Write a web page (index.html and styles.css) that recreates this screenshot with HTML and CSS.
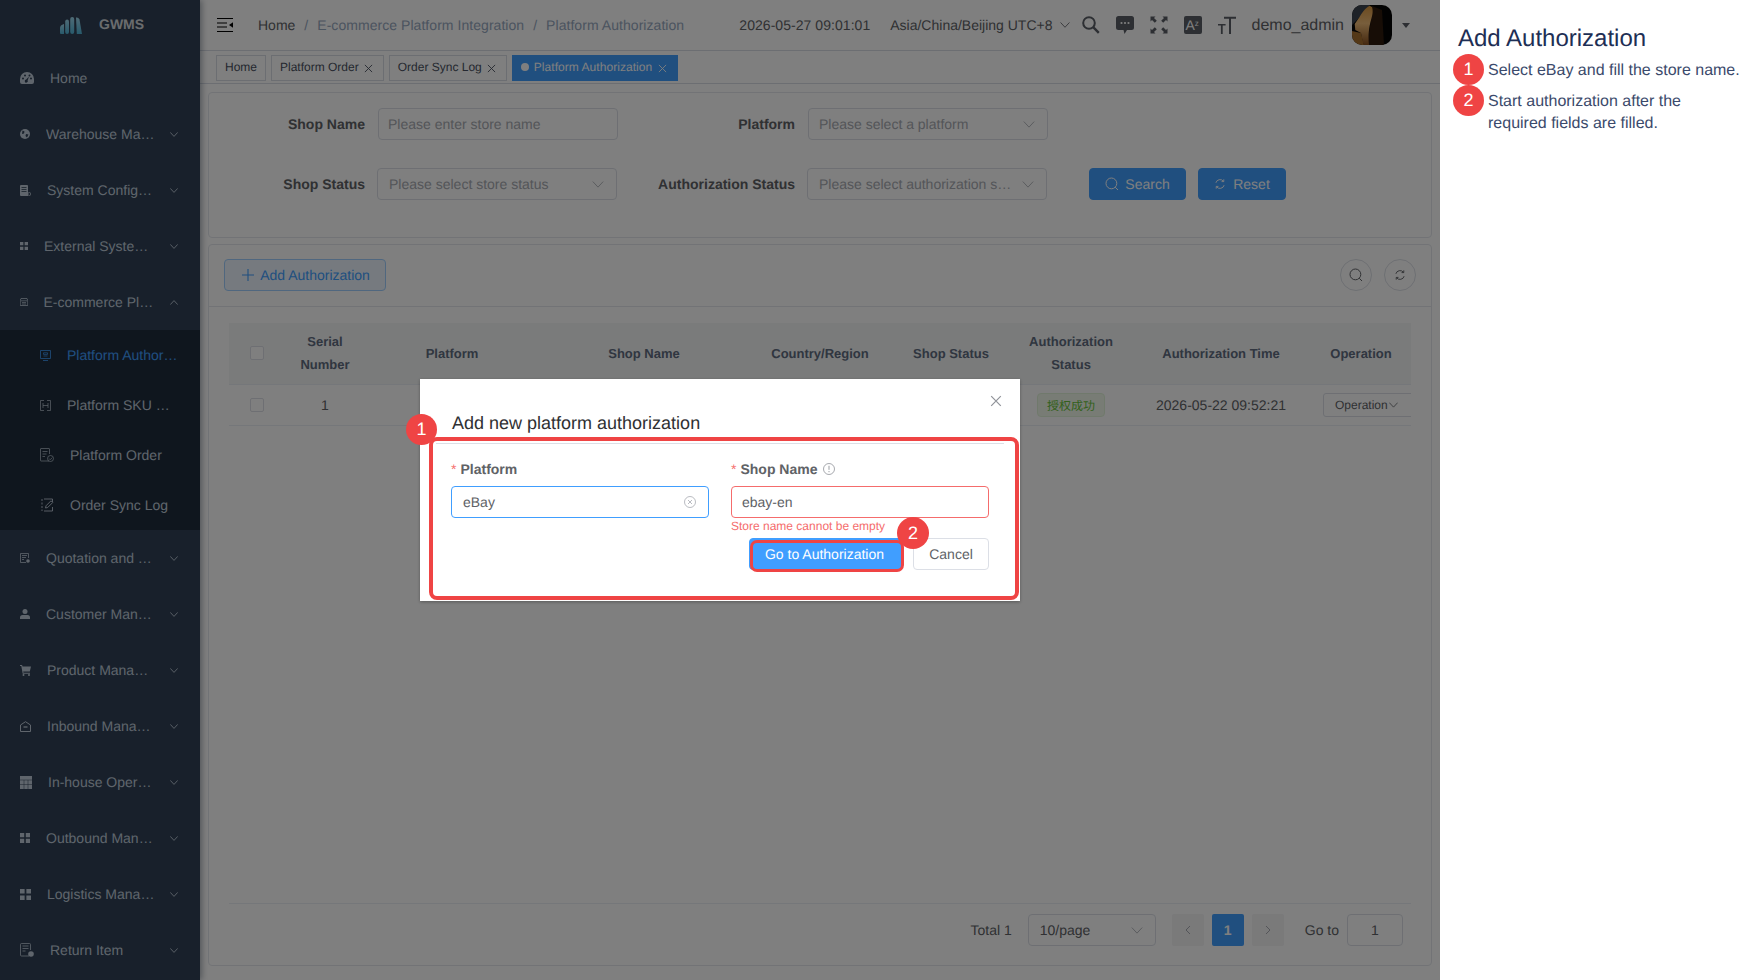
FILE: index.html
```html
<!DOCTYPE html>
<html lang="en">
<head>
<meta charset="utf-8">
<title>GWMS - Platform Authorization</title>
<link rel="stylesheet" href="styles.css">
</head>
<body>
<svg class="defs" width="0" height="0" aria-hidden="true">
  <symbol id="chev-d" viewBox="0 0 8 5"><polyline points="0.3,0.4 4,4.4 7.7,0.4" fill="none" stroke="currentColor"/></symbol>
  <symbol id="chev-u" viewBox="0 0 8 5"><polyline points="0.3,4.6 4,0.6 7.7,4.6" fill="none" stroke="currentColor"/></symbol>
  <symbol id="x" viewBox="0 0 10 10"><path d="M1 1l8 8M9 1l-8 8" fill="none" stroke="currentColor" stroke-width="1"/></symbol>
  <symbol id="search" viewBox="0 0 14 14"><circle cx="6.4" cy="6.4" r="5.4" fill="none" stroke="currentColor" stroke-width="1"/><path d="M10.2 10.2l2.8 2.8" stroke="currentColor" stroke-width="1"/></symbol>
  <symbol id="refresh" viewBox="0 0 14 14"><path d="M2.2 5.6A5 5 0 0 1 11 3.8M11.8 8.4A5 5 0 0 1 3 10.2" fill="none" stroke="currentColor" stroke-width="1.100"/><path d="M11.4 1.6v2.6H8.8M2.6 12.4V9.8h2.6" fill="none" stroke="currentColor" stroke-width="1.100"/></symbol>
  <symbol id="grid4" viewBox="0 0 10 10"><path d="M0 0h4.2v4.2H0zM5.8 0H10v4.2H5.8zM0 5.8h4.2V10H0zM5.8 5.8H10V10H5.8z" fill="currentColor"/></symbol>
</svg>

<div class="app">
  <aside class="sidebar">
    <div class="logo">
      <svg class="logo-mark" width="22" height="17" viewBox="0 0 22 17"><defs><linearGradient id="lg" x1="0" y1="0" x2="0" y2="1"><stop offset="0" stop-color="#9fd8ee"/><stop offset="1" stop-color="#4fb4d8"/></linearGradient></defs><g fill="url(#lg)"><path d="M0 11q0-3 4-4v10H1q-1 0-1-1z"/><rect x="5.200" y="2.500" width="3.800" height="14.500" rx="1.900"/><rect x="10.200" y="0" width="4" height="17" rx="2"/><path d="M16 .5q2.500-.5 3.500 2L22 17h-5.200z"/></g></svg>
      <span class="logo-text">GWMS</span>
    </div>
    <nav class="menu">
      <a class="item">
        <svg class="ic" width="14" height="12" viewBox="0 0 14 12"><path fill-rule="evenodd" d="M7 0a7 7 0 0 1 7 7v3q0 2-2 2H2q-2 0-2-2V7a7 7 0 0 1 7-7zM3 5.500a1 1 0 1 0 0 2 1 1 0 0 0 0-2zM5 2.500a1 1 0 1 0 0 2 1 1 0 0 0 0-2zM9.500 2.500a1 1 0 1 0 0 2 1 1 0 0 0 0-2zM11 5.500a1 1 0 1 0 0 2 1 1 0 0 0 0-2zM9 4.500L6.200 7.600a1.500 1.500 0 1 0 1.400.8z"/></svg>
        <span class="label">Home</span>
      </a>
      <a class="item">
        <svg class="ic" width="10" height="10" viewBox="0 0 10 10"><circle cx="5" cy="5" r="5"/><path d="M2.500 1.500l2 1-.5 2-2 .5zM6 5l2.500.5L7 8.500 5.500 7z" fill="#304156"/></svg>
        <span class="label">Warehouse Management</span>
        <svg class="chev"><use href="#chev-d"/></svg>
      </a>
      <a class="item">
        <svg class="ic" width="11" height="11" viewBox="0 0 11 11"><path d="M0 1q0-1 1-1h6q1 0 1 1v10H1q-1 0-1-1z"/><path d="M1.500 2.500h5M1.500 4.500h5M1.500 6.500h5" stroke="#304156" stroke-width=".8"/><circle cx="9.300" cy="9" r="1.500" fill="none" stroke="currentColor" stroke-width=".8"/></svg>
        <span class="label">System Configuration</span>
        <svg class="chev"><use href="#chev-d"/></svg>
      </a>
      <a class="item">
        <svg class="ic" width="8" height="8" viewBox="0 0 10 10"><use href="#grid4"/></svg>
        <span class="label">External System Integration</span>
        <svg class="chev"><use href="#chev-d"/></svg>
      </a>
      <a class="item">
        <svg class="ic" width="8" height="8" viewBox="0 0 8 8"><path d="M1 .5h6l.8 2v5H.2v-5z" fill="none" stroke="currentColor" stroke-width=".8"/><path d="M.5 2.800h7M2 4.500h4M2 6h4" stroke="currentColor" stroke-width=".7"/></svg>
        <span class="label label-tight">E-commerce Platform Integration</span>
        <svg class="chev"><use href="#chev-u"/></svg>
      </a>
      <div class="submenu">
        <a class="sub active">
          <svg class="ic" width="11" height="11" viewBox="0 0 11 11"><path d="M.5.500h10v8h-10z" fill="none" stroke="currentColor" stroke-width=".8"/><path d="M3 10.500h5" stroke="currentColor" stroke-width=".8"/><path d="M3.500 2.800h4v1.600h-4zM3.500 6h4" fill="none" stroke="currentColor" stroke-width=".7"/></svg>
          <span class="label">Platform Authorization</span>
        </a>
        <a class="sub">
          <svg class="ic" width="11" height="11" viewBox="0 0 11 11"><path d="M4 .5H.5v10H4M7 .5h3.500v10H7" fill="none" stroke="currentColor" stroke-width=".7"/><path d="M3 3v5M8 3v5M3 5.500h5" fill="none" stroke="currentColor" stroke-width=".7"/></svg>
          <span class="label">Platform SKU Mapping</span>
        </a>
        <a class="sub">
          <svg class="ic" width="14" height="14" viewBox="0 0 14 14"><path d="M9 13H1q-.5 0-.5-.5V1q0-.5.5-.5h8q.5 0 .5.5v5M2.500 3.500h5M2.500 6h4M2.500 8.500h2.500" fill="none" stroke="currentColor" stroke-width=".7"/><circle cx="10.500" cy="10.500" r="3" fill="none" stroke="currentColor" stroke-width=".7"/><path d="M9 10.500l1.200 1.200 2-2" fill="none" stroke="currentColor" stroke-width=".7"/></svg>
          <span class="label">Platform Order</span>
        </a>
        <a class="sub">
          <svg class="ic" width="14" height="14" viewBox="0 0 14 14"><path d="M4 1h8.500v3M12.500 9v4H4" fill="none" stroke="currentColor" stroke-width=".9"/><path d="M2 1v12" fill="none" stroke="currentColor" stroke-width=".9" stroke-dasharray="2 1.500"/><path d="M5.500 10l.5-2.200 5-5 1.700 1.700-5 5z" fill="none" stroke="currentColor" stroke-width=".9"/></svg>
          <span class="label">Order Sync Log</span>
        </a>
      </div>
      <a class="item">
        <svg class="ic" width="10" height="10" viewBox="0 0 10 10"><path d="M6 9.500H.5V.5h8V5M2 2.500h5M2 4.500h4M2 6.500h2" fill="none" stroke="currentColor" stroke-width=".8"/><circle cx="8" cy="8" r="1.800"/></svg>
        <span class="label">Quotation and Billing</span>
        <svg class="chev"><use href="#chev-d"/></svg>
      </a>
      <a class="item">
        <svg class="ic" width="10" height="10" viewBox="0 0 10 10"><circle cx="5" cy="2.500" r="2.500"/><path d="M0 10V8.500Q0 6 2.500 6h5Q10 6 10 8.500V10z"/></svg>
        <span class="label">Customer Management</span>
        <svg class="chev"><use href="#chev-d"/></svg>
      </a>
      <a class="item">
        <svg class="ic" width="11" height="11" viewBox="0 0 11 11"><path d="M0 0h2l.6 1.500H11L9.800 6.500H3.200l.3 1.200H10v1H2.700L1.300 1H0z"/><circle cx="3.500" cy="10" r="1"/><circle cx="9" cy="10" r="1"/></svg>
        <span class="label">Product Management</span>
        <svg class="chev"><use href="#chev-d"/></svg>
      </a>
      <a class="item">
        <svg class="ic" width="11" height="11" viewBox="0 0 11 11"><path d="M5.500.7L10.500 4v6.500h-10V4z" fill="none" stroke="currentColor"/><path d="M3.500 6h4" stroke="currentColor" stroke-width="1.300"/></svg>
        <span class="label">Inbound Management</span>
        <svg class="chev"><use href="#chev-d"/></svg>
      </a>
      <a class="item">
        <svg class="ic" width="12" height="13" viewBox="0 0 12 13"><path d="M0 0h12v13H0z"/><path d="M0 4h12M0 8.500h12M4 4v9M8 4v9" stroke="#304156" stroke-width=".5"/></svg>
        <span class="label">In-house Operations</span>
        <svg class="chev"><use href="#chev-d"/></svg>
      </a>
      <a class="item">
        <svg class="ic" width="10" height="10" viewBox="0 0 10 10"><use href="#grid4"/></svg>
        <span class="label">Outbound Management</span>
        <svg class="chev"><use href="#chev-d"/></svg>
      </a>
      <a class="item">
        <svg class="ic" width="11" height="11" viewBox="0 0 10 10"><use href="#grid4"/></svg>
        <span class="label">Logistics Management</span>
        <svg class="chev"><use href="#chev-d"/></svg>
      </a>
      <a class="item">
        <svg class="ic" width="14" height="14" viewBox="0 0 14 14"><path d="M9 13H1.500q-1 0-1-1V1.500q0-1 1-1h8q1 0 1 1V7M2.500 3h6M2.500 5.500h6M2.500 8h3" fill="none" stroke="currentColor" stroke-width=".8"/><circle cx="11" cy="11" r="2.800"/></svg>
        <span class="label">Return Item</span>
        <svg class="chev"><use href="#chev-d"/></svg>
      </a>
    </nav>
  </aside>

  <main class="main">
    <header class="topbar">
      <svg class="toggle" width="16" height="14" viewBox="0 0 16 14"><path d="M0 .5h16M0 13.500h16M0 5h10M0 9h10" stroke="#000" stroke-width="1.200"/><path d="M16 4.200v5.600L12 7z" fill="#000"/></svg>
      <div class="crumbs">
        <span class="crumb-root">Home</span><span class="crumb-sep">/</span><span class="crumb">E-commerce Platform Integration</span><span class="crumb-sep">/</span><span class="crumb">Platform Authorization</span>
      </div>
      <div class="top-right">
        <span class="clock">2026-05-27 09:01:01</span>
        <span class="zone">Asia/China/Beijing UTC+8</span>
        <svg class="zone-chev"><use href="#chev-d"/></svg>
        <svg class="tool tool-first" width="18" height="18" viewBox="0 0 18 18"><circle cx="7" cy="7" r="5.800" fill="none" stroke="#5a5e66" stroke-width="2"/><path d="M11.200 11.200l5.600 5.600" stroke="#5a5e66" stroke-width="2.400"/></svg>
        <svg class="tool" width="18" height="18" viewBox="0 0 18 18"><path d="M2.500 0h13Q18 0 18 2.500v9q0 2.500-2.500 2.500H11l-2.500 4-1-4h-5Q0 14 0 11.500v-9Q0 0 2.500 0z" fill="#5a5e66"/><circle cx="5.500" cy="7" r="1.100" fill="#fff"/><circle cx="9" cy="7" r="1.100" fill="#fff"/><circle cx="12.500" cy="7" r="1.100" fill="#fff"/></svg>
        <svg class="tool" width="18" height="18" viewBox="0 0 18 18"><path d="M.5.500h5L4 2l2.800 2.800-2 2L2 4 .5 5.500zM17.500.5v5L16 4l-2.800 2.800-2-2L14 2 12.500.5zM.5 17.500v-5L2 14l2.800-2.800 2 2L4 16l1.500 1.500zM17.500 17.500h-5L14 16l-2.800-2.800 2-2L16 14l1.500-1.500z" fill="#5a5e66"/></svg>
        <span class="tool lang">A<sup class="lang-sup">z</sup></span>
        <svg class="tool" width="18" height="18" viewBox="0 0 18 18"><path d="M6 .8h12v1.900h-5V18h-2V2.700H6zM0 8h7.600v1.600H4.700V18H2.900V9.600H0z" fill="#5a5e66"/></svg>
        <span class="user">demo_admin</span>
        <svg class="avatar" width="40" height="40" viewBox="0 0 40 40">
          <defs>
            <linearGradient id="mane" x1="0" y1="0" x2="0" y2="1"><stop offset="0" stop-color="#d8963f"/><stop offset=".45" stop-color="#f0bc78"/><stop offset="1" stop-color="#8a5220"/></linearGradient>
          </defs>
          <rect width="40" height="40" fill="#050505"/>
          <path d="M0 0h18L8 12 0 20z" fill="#3c4450"/>
          <path d="M0 26l9 2 3 12H0z" fill="#a8702e"/>
          <path d="M20 1L30 5l2 35H15l4-25z" fill="#2e1a0c"/>
          <path d="M17.600.7C13 3 10 8 7.700 11.700L2.700 19l.6 6L9 28l2 10 1 2h5c-1-10 0-18 2-25 2-6 2-10 1-13z" fill="url(#mane)"/>
        </svg>
        <span class="caret"></span>
      </div>
    </header>

    <div class="tabs">
      <span class="tab">Home</span>
      <span class="tab tab-close">Platform Order<svg class="tab-x"><use href="#x"/></svg></span>
      <span class="tab tab-close">Order Sync Log<svg class="tab-x"><use href="#x"/></svg></span>
      <span class="tab tab-close tab-on"><i class="dot"></i>Platform Authorization<svg class="tab-x"><use href="#x"/></svg></span>
    </div>

    <div class="content">
      <section class="card filter">
        <div class="frow">
          <label class="flabel fl-a">Shop Name</label>
          <div class="ctl ctl-text"><span class="ph">Please enter store name</span></div>
          <label class="flabel fl-b">Platform</label>
          <div class="ctl"><span class="ph">Please select a platform</span><svg class="ctl-chev"><use href="#chev-d"/></svg></div>
        </div>
        <div class="frow frow-2">
          <label class="flabel fl-a">Shop Status</label>
          <div class="ctl"><span class="ph">Please select store status</span><svg class="ctl-chev"><use href="#chev-d"/></svg></div>
          <label class="flabel fl-c">Authorization Status</label>
          <div class="ctl"><span class="ph">Please select authorization status</span><svg class="ctl-chev"><use href="#chev-d"/></svg></div>
          <button class="btn btn-primary btn-search"><svg class="btn-ic"><use href="#search"/></svg>Search</button>
          <button class="btn btn-primary btn-reset"><svg class="btn-ic btn-ic-sm"><use href="#refresh"/></svg>Reset</button>
        </div>
      </section>

      <section class="card list">
        <div class="list-head">
          <button class="btn btn-plain"><svg class="plus" width="12" height="12" viewBox="0 0 12 12"><path d="M6 0v12M0 6h12" stroke="currentColor" stroke-width="1.100"/></svg>Add Authorization</button>
          <div class="round-set">
            <button class="round"><svg class="round-ic"><use href="#search"/></svg></button>
            <button class="round"><svg class="round-ic round-ic-sm"><use href="#refresh"/></svg></button>
          </div>
        </div>
        <div class="list-body">
          <div class="tbl">
            <div class="tr th">
              <div class="td"><i class="check"></i></div>
              <div class="td">Serial Number</div>
              <div class="td">Platform</div>
              <div class="td">Shop Name</div>
              <div class="td">Country/Region</div>
              <div class="td">Shop Status</div>
              <div class="td">Authorization Status</div>
              <div class="td">Authorization Time</div>
              <div class="td">Operation</div>
            </div>
            <div class="tr tb">
              <div class="td"><i class="check"></i></div>
              <div class="td">1</div>
              <div class="td"></div>
              <div class="td"></div>
              <div class="td"></div>
              <div class="td"></div>
              <div class="td"><span class="ok">授权成功</span></div>
              <div class="td">2026-05-22 09:52:21</div>
              <div class="td td-op"><span class="op">Operation<svg class="op-chev"><use href="#chev-d"/></svg></span></div>
            </div>
          </div>
          <div class="pager">
            <span class="total">Total 1</span>
            <div class="size">10/page<svg class="ctl-chev"><use href="#chev-d"/></svg></div>
            <span class="pg pg-off"><svg class="pg-ic" viewBox="0 0 6 10"><polyline points="5,1 1,5 5,9" fill="none" stroke="currentColor"/></svg></span>
            <span class="pg pg-on">1</span>
            <span class="pg pg-off"><svg class="pg-ic" viewBox="0 0 6 10"><polyline points="1,1 5,5 1,9" fill="none" stroke="currentColor"/></svg></span>
            <span class="goto">Go to</span>
            <span class="goto-box">1</span>
          </div>
        </div>
      </section>
    </div>
  </main>

  <div class="overlay">
    <div class="modal">
      <div class="modal-head">
        <span class="modal-title">Add new platform authorization</span>
        <svg class="modal-x"><use href="#x"/></svg>
      </div>
      <div class="modal-body">
        <div class="mgrid">
          <div class="mfield">
            <div class="mlabel"><span class="req">*</span>Platform</div>
            <div class="minput minput-focus"><span>eBay</span>
              <svg class="clear" width="12" height="12" viewBox="0 0 12 12"><circle cx="6" cy="6" r="5.500" fill="none" stroke="currentColor" stroke-width=".8"/><path d="M4 4l4 4M8 4l-4 4" stroke="currentColor" stroke-width=".8"/></svg>
            </div>
          </div>
          <div class="mfield">
            <div class="mlabel"><span class="req">*</span>Shop Name
              <svg class="info" width="12" height="12" viewBox="0 0 12 12"><circle cx="6" cy="6" r="5.500" fill="none" stroke="currentColor" stroke-width=".8"/><path d="M6 2.800v4M6 8v1.200" stroke="currentColor" stroke-width=".9"/></svg>
            </div>
            <div class="minput minput-err"><span>ebay-en</span></div>
            <div class="merr">Store name cannot be empty</div>
          </div>
        </div>
        <div class="mfoot">
          <button class="mbtn mbtn-go">Go to Authorization</button>
          <button class="mbtn mbtn-cancel">Cancel</button>
        </div>
      </div>
      <div class="hl hl-form"></div>
      <div class="hl hl-go"></div>
      <span class="badge badge-form">1</span>
      <span class="badge badge-go">2</span>
    </div>
  </div>
</div>

<aside class="guide">
  <h1 class="guide-title">Add Authorization</h1>
  <div class="step"><span class="badge-flow">1</span><p class="step-text">Select eBay and fill the store name.</p></div>
  <div class="step"><span class="badge-flow">2</span><p class="step-text">Start authorization after the<br>required fields are filled.</p></div>
</aside>
</body>
</html>
```
FILE: styles.css
```css
* { box-sizing: border-box; }
html, body { margin: 0; height: 100%; }
body { display: flex; width: 1760px; height: 980px; overflow: hidden; background: #fff; font-family: "Liberation Sans", Arial, "Noto Sans CJK SC", sans-serif; font-size: 14px; color: #606266; text-rendering: geometricPrecision; }
.defs { position: absolute; }
button { font-family: inherit; margin: 0; text-rendering: inherit; }

.app { position: relative; display: flex; width: 1440px; height: 980px; flex: none; }

/* sidebar */
.sidebar { width: 200px; flex: none; background: #304156; color: #bfcbd9; box-shadow: 2px 0 6px rgba(0,21,41,.35); position: relative; z-index: 1; }
.logo { height: 50px; display: flex; align-items: center; padding: 0 0 0 60px; }
.logo-text { margin-left: 17px; margin-top: -2px; font-size: 14px; font-weight: 700; color: #d4d8dc; }
.menu { display: flex; flex-direction: column; }
.item, .sub { display: flex; align-items: center; gap: 16px; white-space: nowrap; }
.item { height: 56px; padding: 0 22px 0 20px; }
.sub { height: 50px; padding: 0 20px 0 40px; }
.submenu { background: #1f2d3d; display: flex; flex-direction: column; }
.active { color: #409eff; }
.ic { flex: none; fill: currentColor; }
.label { flex: 1; min-width: 0; overflow: hidden; text-overflow: ellipsis; }
.label-tight { margin-left: -.5px; }
.chev { flex: none; width: 8px; height: 5px; margin-left: -1.5px; stroke-width: .9px; }

/* main */
.main { flex: 1; min-width: 0; display: flex; flex-direction: column; background: #fff; }
.topbar { height: 51px; flex: none; display: flex; align-items: center; padding-left: 17px; border-bottom: 1px solid #d8dce5; }
.toggle { flex: none; }
.crumbs { display: flex; margin-left: 25px; white-space: nowrap; }
.crumb-root { color: #606266; }
.crumb { color: #97a8be; letter-spacing: .05px; }
.crumb-sep { margin: 0 9px; color: #97a8be; }
.top-right { margin-left: auto; display: flex; align-items: center; padding-right: 30px; white-space: nowrap; color: #606266; }
.clock { margin-right: 20px; letter-spacing: .05px; }
.zone-chev { width: 10px; height: 6px; margin-left: 7px; stroke-width: .7px; }
.tool { flex: none; margin-left: 16px; }
.tool-first { margin-left: 12px; }
.lang { width: 18px; height: 18px; background: #5a5e66; border-radius: 2px; color: #fff; font-size: 14px; line-height: 18px; padding-left: 2px; overflow: hidden; }
.lang-sup { font-size: 8px; line-height: 0; vertical-align: 4px; }
.user { margin: 2px 0 0 16px; font-size: 16px; }
.avatar { flex: none; margin-left: 8px; border-radius: 10px; }
.caret { margin-left: 10px; border: 4px solid transparent; border-top: 5px solid #5a5e66; border-bottom: 0; }

.tabs { height: 33px; flex: none; display: flex; align-items: flex-start; gap: 5px; padding: 4px 0 0 16px; border-bottom: 1px solid #d8dce5; }
.tab { height: 26px; display: flex; align-items: center; padding: 0 8px 2px; border: 1px solid #d8dce5; font-size: 12px; color: #495060; white-space: nowrap; }
.tab-close { padding-right: 10px; }
.tab-x { width: 9px; height: 9px; margin: 3px 0 0 5px; }
.tab-on { background: #409eff; border-color: #409eff; color: #fff; letter-spacing: .05px; }
.tab-on .tab-x { margin-left: 6px; }
.dot { width: 8px; height: 8px; border-radius: 50%; background: #fff; margin-right: 5px; }

.content { flex: 1; min-height: 0; display: flex; flex-direction: column; gap: 6px; padding: 8px 8px 14px; }
.card { border: 1px solid #e4e7ed; border-radius: 4px; background: #fff; }
.filter { height: 146px; flex: none; padding-top: 15px; }
.frow { display: flex; align-items: center; }
.frow-2 { margin-top: 28px; }
.flabel { text-align: right; font-weight: 700; color: #606266; flex: none; white-space: nowrap; }
.fl-a { width: 156px; margin-right: 13px; }
.fl-b { width: 177px; margin-right: 13px; }
.fl-c { width: 178px; margin-right: 12px; }
.frow-2 .fl-a { margin-right: 12px; }
.ctl { width: 240px; height: 32px; flex: none; display: flex; align-items: center; padding: 0 12px 0 10px; border: 1px solid #dcdfe6; border-radius: 4px; }
.ctl-text { padding-left: 9px; }
.frow-2 .ctl { padding-left: 11px; }
.ph { flex: 1; min-width: 0; color: #a8abb2; overflow: hidden; text-overflow: ellipsis; white-space: nowrap; }
.ctl-chev { width: 12px; height: 7px; flex: none; color: #a8abb2; margin-left: 8px; stroke-width: .6px; }
.btn { height: 32px; flex: none; display: inline-flex; align-items: center; justify-content: center; border-radius: 4px; border: 1px solid #409eff; font-size: 14px; }
.btn-primary { background: #409eff; color: #fff; }
.btn-search { width: 97px; margin-left: 42px; }
.btn-reset { width: 88px; margin-left: 12px; }
.btn-ic { width: 14px; height: 14px; margin-right: 6px; }
.btn-ic-sm { width: 12px; height: 12px; margin-right: 7px; }
.btn-plain { width: 162px; padding: 0 0 0 2px; background: #ecf5ff; border-color: #a0cfff; color: #409eff; }
.plus { margin-right: 6px; }

.list { flex: 1; min-height: 0; display: flex; flex-direction: column; }
.list-head { height: 62px; flex: none; display: flex; align-items: flex-start; justify-content: space-between; padding: 14px 15px 0; border-bottom: 1px solid #e4e7ed; }
.round-set { display: flex; gap: 12px; }
.round { width: 32px; height: 32px; border: 1px solid #dcdfe6; border-radius: 50%; background: #fff; display: flex; align-items: center; justify-content: center; padding: 0; color: #606266; }
.round-ic { width: 14px; height: 14px; }
.round-ic-sm { width: 12px; height: 12px; }
.list-body { flex: 1; min-height: 0; display: flex; flex-direction: column; padding: 16px 20px 19px; }
.tbl { flex: 1; min-height: 0; border-bottom: 1px solid #ebeef5; overflow: hidden; }
.tr { display: grid; grid-template-columns: 56px 80px 174px 210px 142px 120px 120px 180px 100px; border-bottom: 1px solid #ebeef5; }
.th { height: 62px; padding-bottom: 1px; background: #f5f6f7; font-size: 13px; font-weight: 700; color: #606c80; line-height: 23px; }
.tb { height: 41px; }
.td { display: flex; align-items: center; justify-content: center; text-align: center; min-width: 0; padding: 0 10px; }
.td:first-child { padding: 0; }
.td-op { justify-content: flex-start; padding: 0 0 0 12px; overflow: hidden; }
.check { width: 14px; height: 14px; border: 1px solid #dcdfe6; border-radius: 2px; background: #fff; }
.ok { height: 24px; width: 68px; flex: none; display: flex; align-items: center; justify-content: center; background: #f0f9eb; border: 1px solid #e1f3d8; border-radius: 4px; color: #67c23a; font-size: 12px; }
.op { height: 24px; width: 96px; flex: none; display: flex; align-items: center; padding-left: 11px; border: 1px solid #dcdfe6; border-radius: 3px; font-size: 12px; }
.op-chev { width: 9px; height: 6px; margin-left: 1px; stroke-width: .7px; }

.pager { display: flex; align-items: center; justify-content: flex-end; height: 32px; margin-top: 10px; padding-right: 8px; }
.total { margin-right: 16px; }
.size { width: 128px; height: 32px; display: flex; align-items: center; justify-content: space-between; padding: 0 12px 0 11px; border: 1px solid #dcdfe6; border-radius: 4px; margin-right: 16px; }
.pg { width: 32px; height: 32px; display: flex; align-items: center; justify-content: center; border-radius: 2px; margin-right: 8px; }
.pg-off { background: #f4f4f5; color: #a8abb2; }
.pg-on { background: #409eff; color: #fff; font-weight: 700; }
.pg-ic { width: 6px; height: 10px; }
.goto { margin-left: 13px; margin-right: 8px; }
.goto-box { width: 56px; height: 32px; display: flex; align-items: center; justify-content: center; border: 1px solid #dcdfe6; border-radius: 4px; }

/* modal layer */
.overlay { position: absolute; inset: 0; z-index: 5; background: rgba(0,0,0,.5); }
.modal { position: absolute; left: 420px; top: 379px; width: 600px; height: 222px; background: #fff; box-shadow: 0 1px 3px rgba(0,0,0,.3); }
.modal-head { height: 65px; margin: 0 16px; padding: 32px 0 0 16px; border-bottom: 1px solid #dcdfe6; }
.modal-title { display: block; font-size: 18px; line-height: 24px; color: #303133; }
.modal-x { position: absolute; right: 18px; top: 16px; width: 12px; height: 12px; color: #909399; }
.modal-body { padding: 14px 31px 0; }
.mgrid { display: grid; grid-template-columns: 258px 258px; column-gap: 22px; }
.mfield { min-width: 0; }
.mlabel { height: 22px; line-height: 22px; margin-bottom: 6px; font-weight: 700; color: #606266; display: flex; align-items: center; }
.req { color: #f56c6c; font-weight: 400; margin-right: 4px; }
.info { margin-left: 6px; color: #909399; }
.minput { height: 32px; display: flex; align-items: center; justify-content: space-between; padding: 0 12px 0 11px; border-radius: 4px; border: 1px solid #dcdfe6; color: #606266; }
.minput-focus { border-color: #409eff; }
.minput-err { border-color: #f56c6c; padding-left: 10px; }
.clear { color: #a8abb2; }
.merr { height: 16px; font-size: 12px; line-height: 16px; color: #f56c6c; }
.mfoot { display: flex; justify-content: flex-end; gap: 11px; margin-top: 4px; }
.mbtn { height: 32px; border-radius: 4px; font-size: 14px; padding: 0; }
.mbtn-go { width: 153px; padding-right: 2px; background: #409eff; border: 1px solid #409eff; color: #fff; }
.mbtn-cancel { width: 76px; background: #fff; border: 1px solid #dcdfe6; color: #606266; }

.hl { position: absolute; border: 4px solid #ef4444; pointer-events: none; }
.hl-form { left: 9px; top: 58px; width: 590px; height: 163px; border-radius: 8px; }
.hl-go { left: 330px; top: 161px; width: 154px; height: 32px; border-width: 3px; border-radius: 7px; }
.badge, .badge-flow { width: 31px; height: 31px; border-radius: 50%; background: #ef4444; color: #fff; font-size: 18px; display: flex; align-items: center; justify-content: center; flex: none; }
.badge { position: absolute; }
.badge-form { left: -14px; top: 35px; }
.badge-go { left: 477px; top: 138px; width: 32px; height: 32px; }

/* guide */
.guide { width: 320px; flex: none; background: #fff; padding: 23px 10px 0 13px; color: #3b4a6b; }
.guide-title { margin: 0 0 0 5px; font-size: 24px; font-weight: 400; line-height: 31px; color: #1e2f55; }
.step { display: flex; gap: 4px; }
.step-text { margin: 0; padding-top: 6px; font-size: 16px; line-height: 22px; }
```
